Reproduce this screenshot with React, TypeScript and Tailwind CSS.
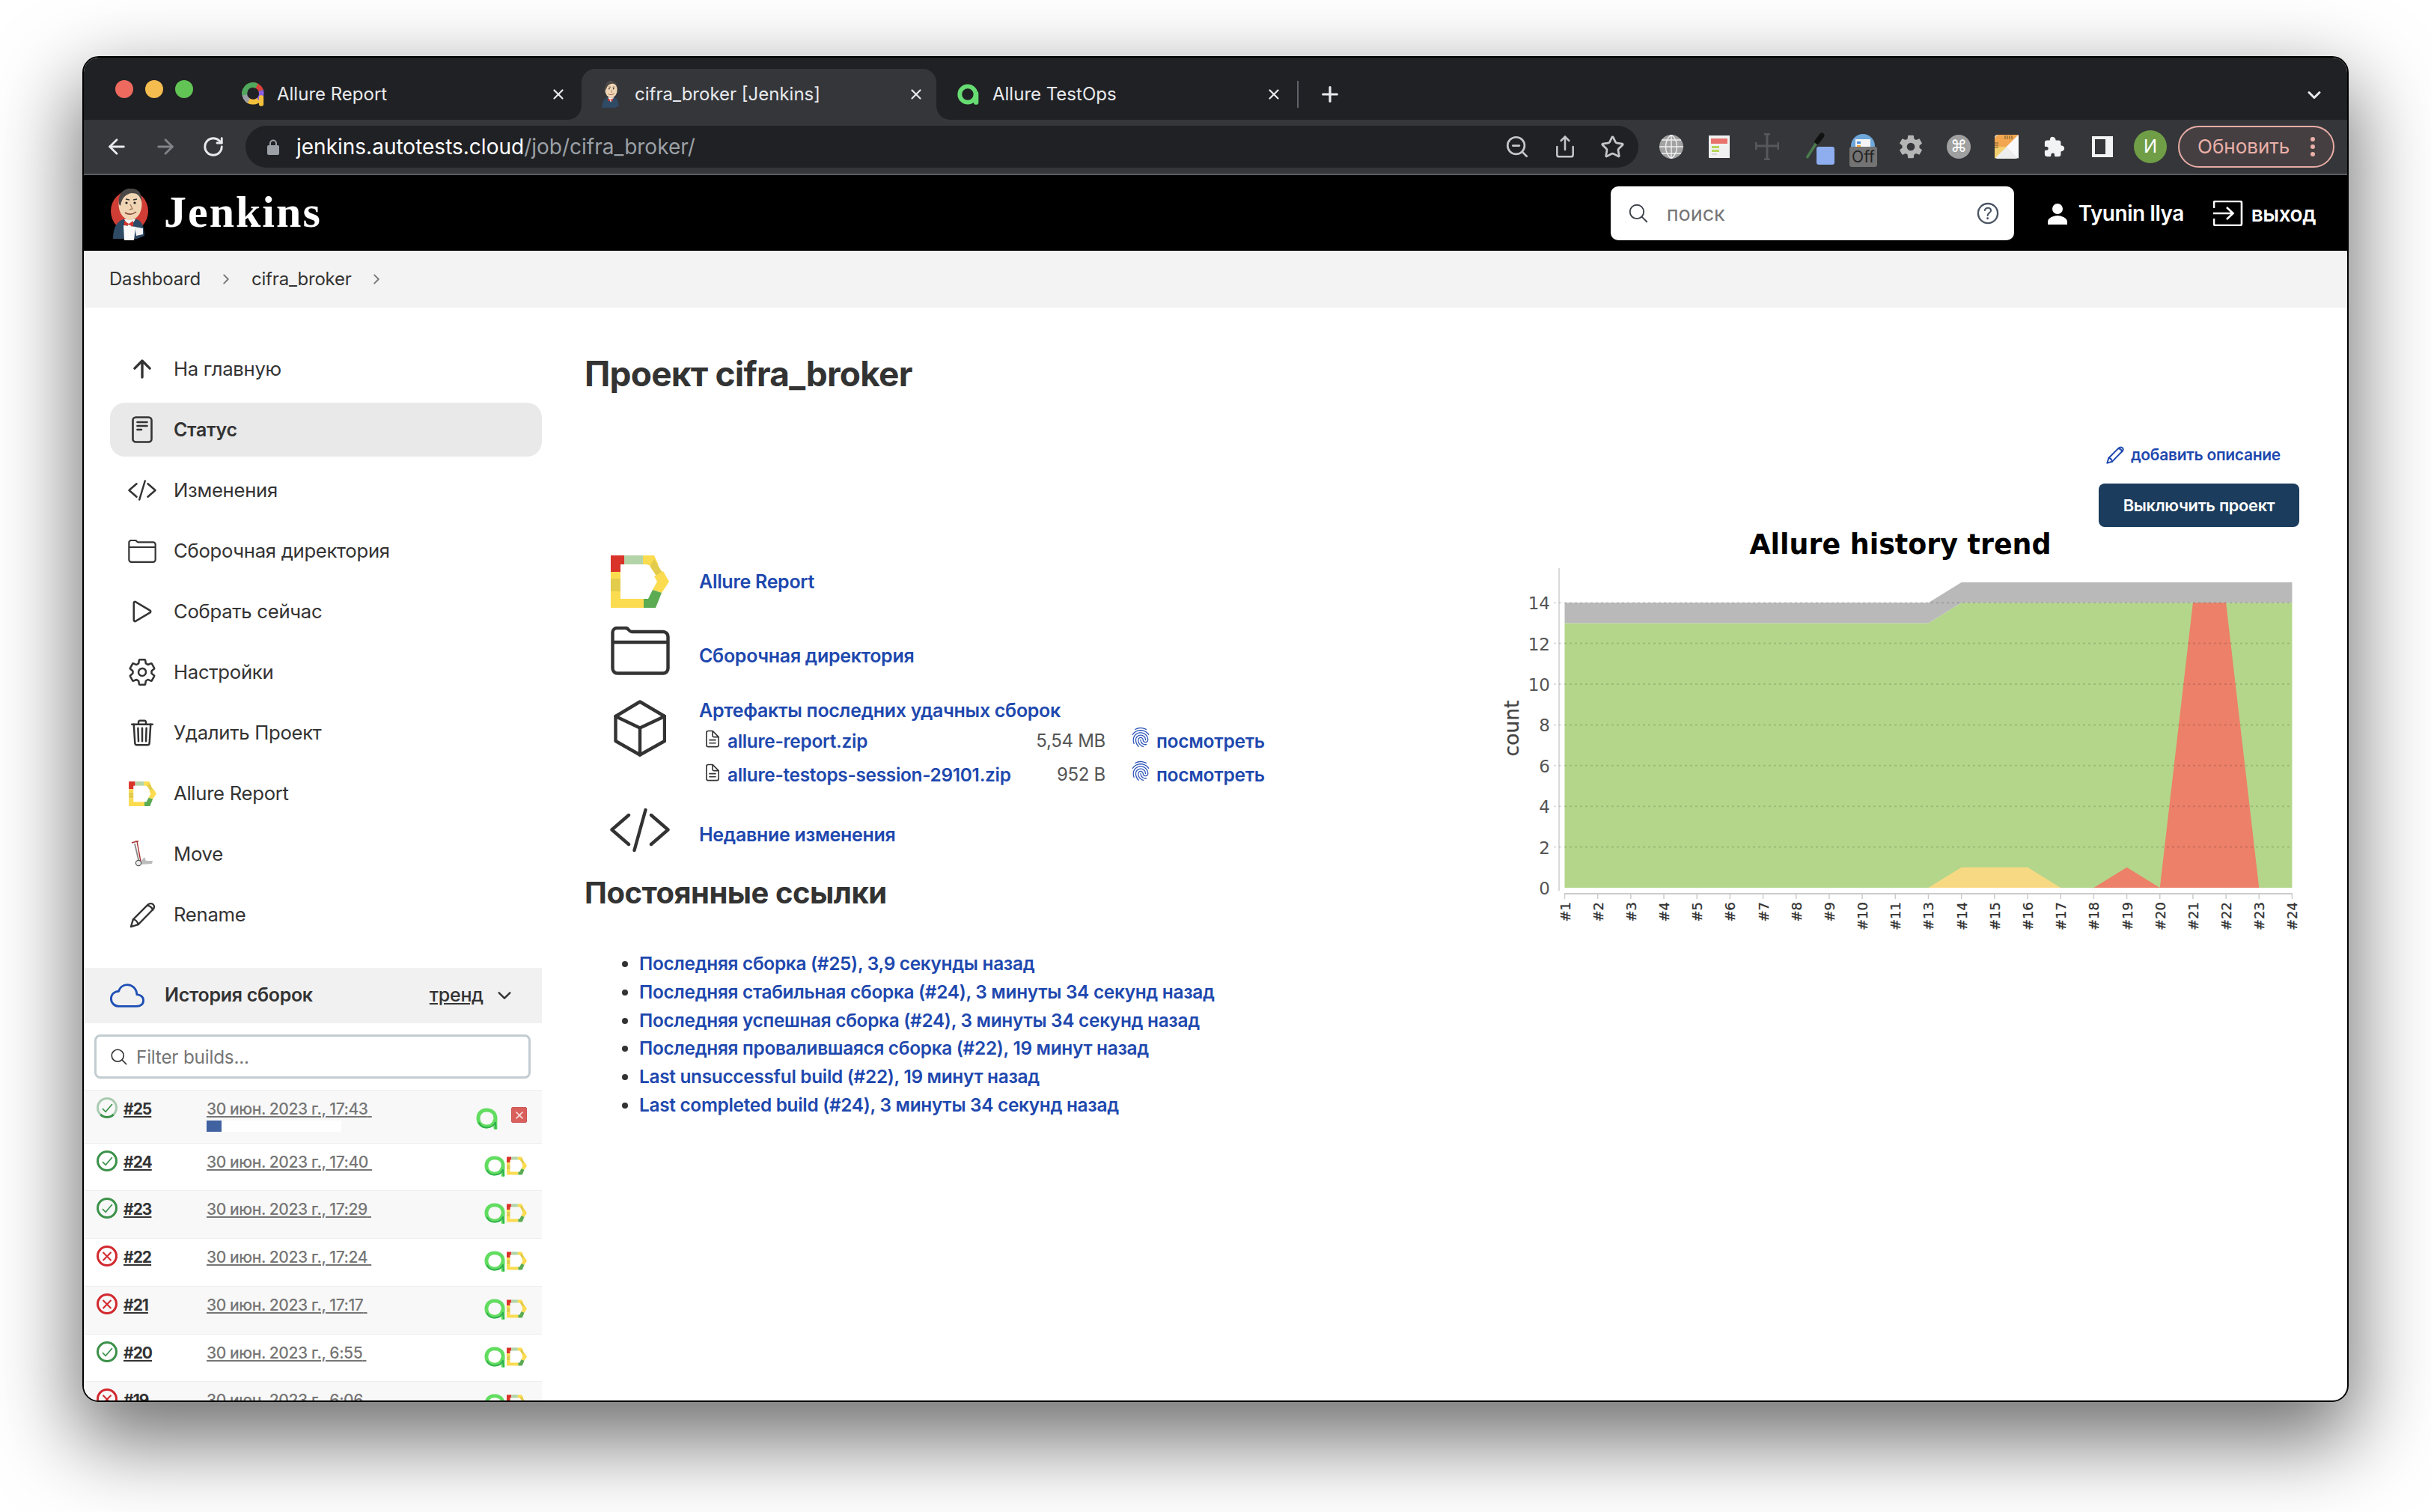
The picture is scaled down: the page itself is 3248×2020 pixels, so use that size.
import React from "react";
import { ArrowLeft, ArrowRight, RotateCw, ZoomOut, Share, Star, X, Plus, ChevronDown } from "lucide-react";
import {
  IoArrowUpOutline, IoCodeSlashOutline, IoPlayOutline, IoSettingsOutline, IoTrashOutline,
  IoCloudOutline, IoSearchOutline, IoHelpCircleOutline, IoPersonSharp, IoChevronForward,
  IoChevronDown, IoDocumentTextOutline, IoFingerPrintOutline, IoExtensionPuzzle, IoSettingsSharp,
  IoCheckmarkSharp, IoCloseSharp,
} from "react-icons/io5";

const UI = "font-['Inter','Liberation_Sans',sans-serif]";

function DLogo({ w, h }: { w: number; h: number }) {
  return (
    <svg width={w} height={h} viewBox="0 0 78 70" className="shrink-0">
      <polygon points="0,0 18,0 18,12 13,12 13,22 0,22" fill="#d9332a" />
      <polygon points="18,0 43,0 43,12 18,12" fill="#b3d4a8" />
      <polygon points="43,0 58,0 64,13 50,13 48,12 43,12" fill="#fbdc50" />
      <polygon points="58,5 72,28 64,32 52,14" fill="#e3cb4b" />
      <polygon points="70,21 78,35 68,50 56,46 62,35 58,28" fill="#fbdc50" />
      <polygon points="56,46 68,50 60,70 44,70 44,58 50,58" fill="#5bab52" />
      <polygon points="0,22 13,22 13,31 0,31" fill="#fbdc50" />
      <polygon points="0,31 13,31 13,48 0,48" fill="#e3cb4b" />
      <polygon points="0,48 13,48 13,58 44,58 44,70 0,70" fill="#fbdc50" />
    </svg>
  );
}

function ALogo({ w, h }: { w: number; h: number }) {
  return (
    <svg width={w} height={h} viewBox="0 0 30 30" className="shrink-0">
      <path d="M26 28 C25.5 26 26 22 26 15 C26 8 21 4 14 4 C7 4 3 9 3 15 C3 22 8 26 14 26 C19 26 24 23 25.5 17" fill="none" stroke="#62dd60" strokeWidth="5" strokeLinecap="round" />
      <path d="M4 21 C6 25 10 27.5 14 27.5 C19 27.5 24 25 26 20 L26.5 28.5" fill="none" stroke="#2fae4f" strokeWidth="1.8" strokeLinecap="round" />
    </svg>
  );
}

function ColorA() {
  const seg = (color: string, dash: string, rot: number) => (
    <circle cx="15" cy="14" r="10" fill="none" stroke={color} strokeWidth="6" strokeDasharray={dash} transform={`rotate(${rot} 15 14)`} />
  );
  return (
    <svg width="34" height="34" viewBox="0 0 30 30" className="shrink-0 -mx-[1px]">
      {seg("#d9423a", "14 70", -100)}
      {seg("#8a5fe0", "13 70", -20)}
      {seg("#f3bf3c", "15 70", 50)}
      {seg("#9aa0a6", "15 70", 120)}
      {seg("#4fa85b", "22 70", 170)}
      <rect x="22" y="16" width="5.5" height="13" rx="2.5" fill="#f3bf3c" />
    </svg>
  );
}

function TealA() {
  return (
    <svg width="32" height="32" viewBox="0 0 30 30" className="shrink-0">
      <circle cx="14" cy="15" r="10" fill="none" stroke="#66dc72" strokeWidth="5.5" />
      <rect x="21.5" y="11" width="6" height="17" rx="3" fill="#66dc72" />
    </svg>
  );
}

function Butler({ w, h, circle }: { w: number; h: number; circle?: boolean }) {
  return (
    <svg width={w} height={h} viewBox="0 0 52 72" className="shrink-0">
      {circle && <ellipse cx="26" cy="33" rx="25" ry="27" fill="#cf3d34" />}
      <path d="M4 70 C4 54 10 46 18 44 L36 44 C42 46 46 54 46 66 L36 70 Z" fill="#2f4a64" />
      <path d="M19 44 L26 56 L34 44 Z" fill="#f4f4f4" />
      <path d="M19 46 L25 50 L31 46 L31 54 L25 51 L19 54 Z" fill="#d6332b" />
      <ellipse cx="27" cy="24" rx="15.5" ry="21" fill="#f0d5b4" />
      <path d="M12 24 C10 8 20 2 29 3 C38 3 43 10 42 20 C40 12 36 9 29 9 C22 10 16 14 14 26 Z" fill="#4a4846" />
      <circle cx="22" cy="22" r="1.6" fill="#222" />
      <circle cx="33" cy="22" r="1.6" fill="#222" />
      <path d="M21 17 L26 18 M31 18 L36 17" stroke="#333" strokeWidth="1.6" fill="none" />
      <path d="M27 24 L30 30 L26 31" stroke="#a5795a" strokeWidth="1.3" fill="none" />
      <path d="M20 35 C24 38 30 38 35 34" stroke="#8a4a3c" strokeWidth="1.6" fill="none" />
      {circle && <path d="M18 52 L34 54 L32 72 L19 72 Z" fill="#fafafa" />}
      {circle && <path d="M33 54 L44 56 L44 64 L35 66 Z" fill="#f2f2f2" />}
    </svg>
  );
}

function PencilIcon({ size, color, width = 2.4 }: { size: number; color: string; width?: number }) {
  return (
    <svg width={size} height={size} viewBox="0 0 36 36" fill="none" stroke={color} strokeWidth={width} strokeLinejoin="round" strokeLinecap="round" className="shrink-0">
      <path d="M2 34 L5 24 L25 4 C27.5 1.5 31.5 1.5 33 4 C34.5 6 34 8.5 32 10.5 L12 31 Z" />
      <path d="M5 24 C8 24 11 27 12 31 M25 5 C28 5.5 31 8 32 11" />
    </svg>
  );
}

function FolderIcon({ w, h, width }: { w: number; h: number; width: number }) {
  return (
    <svg width={w} height={h} viewBox="0 0 79 65" fill="none" stroke="#333" strokeWidth={width} strokeLinejoin="round" className="shrink-0">
      <path d="M2.5 12 V8 a6 6 0 0 1 6 -6 H20 c4 0 4 5 8 5 H70 a6.5 6.5 0 0 1 6.5 6.5 V56 a6.5 6.5 0 0 1 -6.5 6.5 H9 a6.5 6.5 0 0 1 -6.5 -6.5 Z" />
      <path d="M2.5 21 H76.5" />
    </svg>
  );
}

function CubeIcon() {
  return (
    <svg width="70" height="76" viewBox="0 0 70 76" fill="none" stroke="#333" strokeWidth="4.4" strokeLinejoin="round" strokeLinecap="round" className="shrink-0">
      <path d="M35 2.5 L68 22 V55 L35 73.5 L2.5 55 V22 Z" />
      <path d="M2.5 22 L35 37.5 L68 22 M35 37.5 V73.5" />
    </svg>
  );
}

function CodeIcon() {
  return (
    <svg width="80" height="58" viewBox="0 0 80 58" fill="none" stroke="#333" strokeWidth="4.4" strokeLinejoin="round" strokeLinecap="round" className="shrink-0">
      <path d="M25 9 L2.5 28.5 L25 48 M55 9 L77.5 28.5 L55 48 M47.5 2 L32.5 56" />
    </svg>
  );
}

function ExtSlot({ children }: { children: React.ReactNode }) {
  return <div className="relative w-[64px] h-[56px] flex items-center justify-center shrink-0">{children}</div>;
}

function Tab({ icon, title, active }: { icon: React.ReactNode; title: string; active?: boolean }) {
  return (
    <div className={`relative h-[68px] flex items-center pl-[23px] shrink-0 ${active ? "w-[474px] mr-[4px] pr-[16px] bg-[#35363a] rounded-t-[18px]" : "w-[478px] pr-[20px]"}`}>
      {active && <span className="absolute left-[-18px] bottom-0 w-[18px] h-[18px] bg-[radial-gradient(circle_at_0_0,#202124_17.5px,#35363a_18px)]" />}
      {active && <span className="absolute right-[-18px] bottom-0 w-[18px] h-[18px] bg-[radial-gradient(circle_at_100%_0,#202124_17.5px,#35363a_18px)]" />}
      <span className="w-[32px] flex items-center justify-center shrink-0">{icon}</span>
      <span className="ml-[16px] text-[24px] leading-[32px] text-[#e8eaed] mb-[1px]">{title}</span>
      <X size={22} strokeWidth={2.4} color="#e8eaed" className="ml-auto" />
    </div>
  );
}

function TitleBar() {
  return (
    <div className="h-[83px] bg-[#202124] flex items-end pl-[42px] shrink-0">
      <div className="flex gap-[16px] self-start mt-[30px] mr-[41px]">
        <span className="w-[24px] h-[24px] rounded-full bg-[#ee6a5f]" />
        <span className="w-[24px] h-[24px] rounded-full bg-[#f5bd4f]" />
        <span className="w-[24px] h-[24px] rounded-full bg-[#61c454]" />
      </div>
      <Tab icon={<ColorA />} title="Allure Report" />
      <Tab icon={<Butler w={28} h={38} />} title="cifra_broker [Jenkins]" active />
      <Tab icon={<TealA />} title="Allure TestOps" />
      <span className="w-[2px] h-[36px] bg-[#5f6368] mb-[16px] shrink-0" />
      <Plus size={32} strokeWidth={2.4} color="#e8eaed" className="ml-[26px] mb-[18px] shrink-0" />
      <ChevronDown size={28} strokeWidth={2.6} color="#e8eaed" className="ml-auto mr-[30px] mb-[19px] shrink-0" />
    </div>
  );
}

function ToolBar() {
  return (
    <div className="h-[74px] bg-[#35363a] border-b-2 border-[#5c5d60] flex items-center shrink-0">
      <div className="w-[216px] flex items-center shrink-0 pl-[28px] gap-[33px]">
        <ArrowLeft size={32} strokeWidth={2.1} color="#e8eaed" />
        <ArrowRight size={32} strokeWidth={2.1} color="#808489" />
        <RotateCw size={30} strokeWidth={2.3} color="#e8eaed" />
      </div>
      <div className="w-[1861px] h-[56px] rounded-[28px] bg-[#202124] flex items-center pl-[29px] pr-[18px] shrink-0">
        <svg width="16" height="22" viewBox="0 0 16 22" className="shrink-0">
          <path d="M4 10 V6.5 a4 4 0 0 1 8 0 V10" fill="none" stroke="#9aa0a6" strokeWidth="2" />
          <rect x="0" y="9" width="16" height="13" rx="2" fill="#9aa0a6" />
        </svg>
        <span className="ml-[23px] text-[28px] leading-[36px] text-white">
          jenkins.autotests.cloud<span className="text-[#9aa0a6]">/job/cifra_broker/</span>
        </span>
        <div className="ml-auto flex items-center gap-[31px] text-[#c4c7ca]">
          <ZoomOut size={34} strokeWidth={1.9} />
          <Share size={32} strokeWidth={1.9} />
          <Star size={33} strokeWidth={2} />
        </div>
      </div>
      <div className="flex items-center ml-[12px]">
        <ExtSlot>
          <svg width="32" height="32" viewBox="0 0 32 32">
            <circle cx="16" cy="16" r="16" fill="#a2a2a2" />
            <path d="M0 16H32M3 7H29M3 25H29M16 0V32M16 0C6 8 6 24 16 32M16 0C26 8 26 24 16 32" stroke="#f0f0f0" strokeWidth="1.4" fill="none" />
          </svg>
        </ExtSlot>
        <ExtSlot>
          <svg width="28" height="30" viewBox="0 0 28 30">
            <rect width="28" height="30" fill="#f1f1f1" />
            <rect x="3" y="4" width="22" height="7" fill="#e9736c" />
            <rect x="4" y="14" width="10" height="3" fill="#b6d65a" />
            <rect x="4" y="19" width="10" height="3" fill="#b6d65a" />
            <rect x="4" y="24" width="7" height="2" fill="#d8d8d8" />
          </svg>
        </ExtSlot>
        <ExtSlot>
          <svg width="32" height="36" viewBox="0 0 32 36">
            <path d="M16 1V35M1 17H31M12 1H20M12 35H20M1 12V22M31 12V22" stroke="#56585c" strokeWidth="3" fill="none" />
          </svg>
        </ExtSlot>
        <ExtSlot>
          <svg width="28" height="38" viewBox="0 0 28 38">
            <path d="M3 34 L19 9" stroke="#4b7b4e" strokeWidth="3.5" />
            <path d="M17 12 L23 4" stroke="#111" strokeWidth="7" strokeLinecap="round" />
          </svg>
          <span className="absolute left-[34px] top-[28px] w-[24px] h-[24px] rounded-[3px] bg-[#8eaef0]" />
        </ExtSlot>
        <ExtSlot>
          <svg width="32" height="32" viewBox="0 0 32 32" className="mb-[2px]">
            <circle cx="16" cy="16" r="16" fill="#6ea7d9" />
            <rect x="6" y="7" width="20" height="18" fill="#f5f5f5" />
            <rect x="8" y="10" width="5" height="3" fill="#4a90d9" />
            <rect x="8" y="15" width="5" height="3" fill="#f2a93b" />
          </svg>
          <span className="absolute left-[14px] top-[28px] w-[37px] h-[27px] rounded-[3px] bg-[#737373] text-[#222] text-[21px] leading-[27px] text-center">Off</span>
        </ExtSlot>
        <ExtSlot><IoSettingsSharp size={34} color="#b5b5b5" /></ExtSlot>
        <ExtSlot>
          <span className="w-[32px] h-[32px] rounded-full bg-[#a0a0a0] text-white text-[22px] leading-[32px] text-center font-['DejaVu_Sans',sans-serif]">⌘</span>
        </ExtSlot>
        <ExtSlot>
          <svg width="32" height="32" viewBox="0 0 32 32">
            <rect width="32" height="32" rx="4" fill="#ededed" />
            <path d="M4 0 H32 L16 16 H0 V4 Z" fill="#f2a650" />
            <path d="M0 16 H16 L0 32 Z" fill="#f4cf6f" />
            <path d="M32 0 V32 L16 16 Z" fill="#fafafa" />
            <path d="M14 1V6M17 1V6M20 1V6M23 1V6M0 11H5M0 14H5M0 17H5" stroke="#6a5a2a" strokeWidth="1" />
          </svg>
        </ExtSlot>
        <ExtSlot><IoExtensionPuzzle size={30} color="#f1f3f4" /></ExtSlot>
        <ExtSlot>
          <span className="w-[28px] h-[28px] bg-[#f1f3f4] flex pl-[4px] py-[4px] pr-[10px]">
            <span className="flex-1 bg-[#35363a]" />
          </span>
        </ExtSlot>
        <ExtSlot>
          <span className="w-[44px] h-[44px] rounded-full bg-[#6f9e47] text-white text-[24px] leading-[44px] text-center">И</span>
        </ExtSlot>
      </div>
      <div className="ml-[5px] w-[209px] h-[56px] rounded-[28px] border-2 border-[#e8ada6] bg-[#453f42] flex items-center pl-[24px] shrink-0">
        <span className="text-[26px] leading-[32px] text-[#eab0a8]">Обновить</span>
        <span className="ml-auto mr-[24px] flex flex-col gap-[4px]">
          <span className="w-[6px] h-[6px] rounded-full bg-[#eab0a8]" />
          <span className="w-[6px] h-[6px] rounded-full bg-[#eab0a8]" />
          <span className="w-[6px] h-[6px] rounded-full bg-[#eab0a8]" />
        </span>
      </div>
    </div>
  );
}

function Header() {
  return (
    <div className="h-[101px] bg-black flex items-center pl-[35px] pr-[42px] shrink-0">
      <Butler w={52} h={72} circle />
      <span className="ml-[20px] text-[60px] leading-[64px] font-bold text-white font-['Liberation_Serif',serif] tracking-[2px] mb-[4px]">Jenkins</span>
      <div className="ml-auto w-[539px] h-[72px] rounded-[10px] bg-white flex items-center pl-[22px] pr-[16px]">
        <IoSearchOutline size={30} color="#3b4048" />
        <span className="ml-[23px] text-[27px] leading-[32px] text-[#757575] mt-[3px]">поиск</span>
        <IoHelpCircleOutline size={38} color="#4b5563" className="ml-auto" />
      </div>
      <IoPersonSharp size={32} color="white" className="ml-[42px] mt-[2px]" />
      <span className="ml-[12px] text-[28px] leading-[36px] font-semibold text-white tracking-[-0.5px]">Tyunin Ilya</span>
      <svg width="40" height="34" viewBox="0 0 40 34" className="ml-[39px]" fill="none" stroke="white" strokeWidth="2.6">
        <path d="M1 10 V3 a2 2 0 0 1 2 -2 H36 a2 2 0 0 1 2 2 V31 a2 2 0 0 1 -2 2 H3 a2 2 0 0 1 -2 -2 V24" />
        <path d="M0 17 H26 M18 9 L26.5 17 L18 25" />
      </svg>
      <span className="ml-[11px] text-[28px] leading-[36px] font-semibold text-white tracking-[-0.5px] mt-[2px]">выход</span>
    </div>
  );
}

function Breadcrumbs() {
  return (
    <div className="h-[76px] bg-[#f3f3f3] flex items-center pl-[34px] shrink-0 text-[24px] leading-[32px] text-[#333] tracking-[-0.2px]">
      <span>Dashboard</span>
      <IoChevronForward size={20} color="#777" className="ml-[24px]" />
      <span className="ml-[24px]">cifra_broker</span>
      <IoChevronForward size={20} color="#777" className="ml-[23px]" />
    </div>
  );
}

function StatusIcon() {
  return (
    <svg width="28" height="36" viewBox="0 0 28 36" fill="none" stroke="#333" strokeWidth="2.6" strokeLinecap="round">
      <rect x="1.5" y="1.5" width="25" height="33" rx="4" />
      <path d="M7.5 8H20.5M7.5 13H20.5M7.5 18H13" />
    </svg>
  );
}

function Trolley() {
  return (
    <svg width="30" height="36" viewBox="0 0 30 36" fill="none">
      <path d="M1 3 L8 1 L13 28 M6 1 L10 1" stroke="#a33" strokeWidth="1.4" />
      <path d="M5 4 L11 30" stroke="#888" strokeWidth="1.8" />
      <path d="M12 29 L18 22 L20 27 L29 27 L28 31 L13 32 Z" fill="#bdbdbd" />
      <circle cx="10" cy="30" r="3.6" fill="#eee" stroke="#555" strokeWidth="1.2" />
    </svg>
  );
}

const NAV: { label: string; icon: React.ReactNode; active?: boolean }[] = [
  { label: "На главную", icon: <IoArrowUpOutline size={36} color="#333" /> },
  { label: "Статус", icon: <StatusIcon />, active: true },
  { label: "Изменения", icon: <IoCodeSlashOutline size={40} color="#333" /> },
  { label: "Сборочная директория", icon: <FolderIcon w={38} h={31} width={4.6} /> },
  { label: "Собрать сейчас", icon: <IoPlayOutline size={40} color="#333" /> },
  { label: "Настройки", icon: <IoSettingsOutline size={40} color="#333" /> },
  { label: "Удалить Проект", icon: <IoTrashOutline size={40} color="#333" /> },
  { label: "Allure Report", icon: <DLogo w={37} h={33} /> },
  { label: "Move", icon: <Trolley /> },
  { label: "Rename", icon: <PencilIcon size={35} color="#333" /> },
];

const BUILDS = [
  { n: "#25", d: "30 июн. 2023 г., 17:43", ok: true, h: 71, running: true },
  { n: "#24", d: "30 июн. 2023 г., 17:40", ok: true, h: 63 },
  { n: "#23", d: "30 июн. 2023 г., 17:29", ok: true, h: 64 },
  { n: "#22", d: "30 июн. 2023 г., 17:24", ok: false, h: 64 },
  { n: "#21", d: "30 июн. 2023 г., 17:17", ok: false, h: 64 },
  { n: "#20", d: "30 июн. 2023 г., 6:55", ok: true, h: 63 },
  { n: "#19", d: "30 июн. 2023 г., 6:06", ok: false, h: 64 },
];

function BuildStatus({ ok, running }: { ok: boolean; running?: boolean }) {
  const c = ok ? "#3b9149" : "#d2282e";
  const border = running ? "border-[#a9cbb0] border-b-[#3b9149]" : ok ? "border-[#3b9149]" : "border-[#d2282e]";
  return (
    <span className={`relative w-[28px] h-[28px] rounded-full border-[3px] flex items-center justify-center shrink-0 ${border}`}>
      {ok ? <IoCheckmarkSharp size={19} color={c} /> : <IoCloseSharp size={23} color={c} />}
    </span>
  );
}

function BuildRow({ b, idx }: { b: (typeof BUILDS)[number]; idx: number }) {
  return (
    <div className={`shrink-0 flex items-start pl-[17px] pr-[20px] pt-[9px] border-t border-[#eeeeee] ${idx % 2 === 0 ? "bg-[#f8f8f8]" : "bg-white"} ${b.h === 71 ? "h-[71px]" : b.h === 63 ? "h-[63px]" : "h-[64px]"}`}>
      <BuildStatus ok={b.ok} running={b.running} />
      <span className="ml-[8px] mt-[2px] w-[111px] text-[21px] leading-[28px] font-bold underline text-[#333] tracking-[-1px] shrink-0">{b.n}</span>
      <div className="flex flex-col w-[240px] mt-[2px] shrink-0">
        <span className="text-[21px] leading-[28px] text-[#767676] font-medium underline tracking-[-0.42px] whitespace-pre">{b.d}{" "}</span>
        {b.running && (
          <span className="mt-[1px] w-[180px] h-[15px] bg-white flex">
            <span className="w-[20px] bg-[#4062a0]" />
          </span>
        )}
      </div>
      {b.running ? (
        <div className="ml-auto mt-[13px] flex items-start">
          <ALogo w={30} h={30} />
          <span className="ml-[17px] w-[21px] h-[21px] rounded-[2px] bg-[#d9605c] border border-[#c55] flex items-center justify-center">
            <IoCloseSharp size={18} color="#f5e0e0" />
          </span>
        </div>
      ) : (
        <div className="ml-auto mt-[6px] flex items-center gap-[1px]">
          <ALogo w={29} h={29} />
          <DLogo w={27} h={25} />
        </div>
      )}
    </div>
  );
}

function Sidebar() {
  return (
    <div className="w-[612px] shrink-0 flex flex-col pt-[46px] overflow-hidden">
      <div className="flex flex-col gap-[9px] pl-[35px] shrink-0">
        {NAV.map((n) => (
          <div key={n.label} className={`h-[72px] w-[577px] rounded-[20px] flex items-center pl-[19px] shrink-0 ${n.active ? "bg-[#e9e9e9]" : ""}`}>
            <span className="w-[48px] h-[48px] flex items-center justify-center shrink-0">{n.icon}</span>
            <span className={`ml-[18px] leading-[32px] text-[#333] tracking-[-0.3px] ${n.active ? "font-semibold text-[25px]" : "text-[25.7px]"}`}>{n.label}</span>
          </div>
        ))}
      </div>
      <div className="mt-[35px] h-[74px] bg-[#f1f1f1] flex items-center pl-[35px] shrink-0">
        <IoCloudOutline size={46} color="#1f4fb4" />
        <span className="ml-[27px] mb-[2px] text-[25px] leading-[32px] font-semibold text-[#333] tracking-[-0.3px]">История сборок</span>
        <span className="ml-[156px] mb-[2px] text-[25px] leading-[32px] font-medium text-[#333] underline tracking-[-0.3px]">тренд</span>
        <IoChevronDown size={26} color="#333" className="ml-[15px]" />
      </div>
      <div className="mt-[15px] ml-[14px] w-[583px] h-[59px] shrink-0 rounded-[8px] border-[3px] border-[#c3ccd1] flex items-center pl-[17px]">
        <IoSearchOutline size={26} color="#333" />
        <span className="ml-[10px] text-[24.3px] leading-[32px] text-[#757575] tracking-[-0.2px]">Filter builds...</span>
      </div>
      <div className="mt-[15px] flex flex-col">
        {BUILDS.map((b, i) => <BuildRow key={b.n} b={b} idx={i} />)}
      </div>
    </div>
  );
}

const LINK = "text-[#1e48ae] font-semibold tracking-[-0.3px]";

function LinkRow({ icon, children }: { icon: React.ReactNode; children: React.ReactNode }) {
  return (
    <div className="flex items-center pl-[34px]">
      <span className="w-[80px] flex items-center justify-center shrink-0">{icon}</span>
      <div className="ml-[39px]">{children}</div>
    </div>
  );
}

function Artifact({ name, size }: { name: string; size: string }) {
  return (
    <div className="h-[45px] flex items-center">
      <IoDocumentTextOutline size={26} color="#333" className="ml-[5px] mb-[6px] shrink-0" />
      <span className={`ml-[7px] w-[392px] text-[24.4px] leading-[32px] ${LINK}`}>{name}</span>
      <span className="w-[113px] text-right text-[24px] leading-[32px] text-[#555] tracking-[-0.3px]">{size}</span>
      <IoFingerPrintOutline size={28} color="#2a53b8" className="ml-[33px] mb-[10px] shrink-0" />
      <span className={`ml-[7px] text-[24.6px] leading-[32px] ${LINK}`}>посмотреть</span>
    </div>
  );
}

const LINKS = [
  "Последняя сборка (#25), 3,9 секунды назад",
  "Последняя стабильная сборка (#24), 3 минуты 34 секунд назад",
  "Последняя успешная сборка (#24), 3 минуты 34 секунд назад",
  "Последняя провалившаяся сборка (#22), 19 минут назад",
  "Last unsuccessful build (#22), 19 минут назад",
  "Last completed build (#24), 3 минуты 34 секунд назад",
];

function Chart() {
  const X0 = 2090.5, DX = 44.18, Y0 = 1186, DY = 27.2;
  const x = (i: number) => X0 + i * DX;
  const y = (v: number) => Y0 - v * DY;
  const labels = ["1","2","3","4","5","6","7","8","9","10","11","13","14","15","16","17","18","19","20","21","22","23","24"];
  const poly = (pts: [number, number][]) => pts.map(([i, v]) => `${x(i)},${y(v)}`).join(" ");
  return (
    <svg width="1080" height="556" viewBox="2000 704 1080 556" className="shrink-0 font-['DejaVu_Sans',sans-serif]">
      <text x="2539" y="740" textAnchor="middle" fontSize="36.4" fontWeight="700" fill="#000">Allure history trend</text>
      <line x1="2083" y1="759" x2="2083" y2="1190" stroke="#ccc" strokeWidth="1.5" />
      <polygon points={poly([[0,13],[11,13],[12,14],[22,14],[22,0],[0,0]])} fill="#b4d68a" />
      <polygon points={poly([[0,14],[11,14],[12,15],[22,15],[22,14],[12,14],[11,13],[0,13]])} fill="#b9b9b9" />
      <polygon points={poly([[11,0],[12,1],[14,1],[15,0]])} fill="#f8d983" />
      <polygon points={poly([[16,0],[17,1],[18,0]])} fill="#ec8069" />
      <polygon points={poly([[18,0],[19,14],[20,14],[21,0]])} fill="#ec8069" />
      {[0, 2, 4, 6, 8, 10, 12, 14].map((v) => (
        <g key={v}>
          {v > 0 && <line x1="2076" y1={y(v)} x2="3062" y2={y(v)} stroke="#000" strokeOpacity="0.13" strokeWidth="2" strokeDasharray="3 4" />}
          <text x="2071" y={y(v) + 9} textAnchor="end" fontSize="23" fill="#555">{v}</text>
        </g>
      ))}
      <line x1="2090" y1="1194" x2="3063" y2="1194" stroke="#ccc" strokeWidth="2" />
      {labels.map((l, i) => (
        <g key={l}>
          <line x1={x(i)} y1="1194" x2={x(i)} y2="1201" stroke="#ccc" strokeWidth="1.5" />
          <text transform={`translate(${x(i) + 7} 1205) rotate(-90)`} textAnchor="end" fontSize="18" fill="#333" stroke="#333" strokeWidth="0.3">#{l}</text>
        </g>
      ))}
      <text transform="translate(2029 973) rotate(-90)" textAnchor="middle" fontSize="26.5" fill="#444" stroke="#444" strokeWidth="0.3">count</text>
    </svg>
  );
}

function Main() {
  return (
    <div className="flex-1 flex min-w-0">
      <div className="flex-1 pl-[57px] min-w-0">
        <h1 className="mt-[58px] h-[60px] text-[46px] leading-[60px] font-bold text-[#333] tracking-[-0.8px]">Проект cifra_broker</h1>
        <div className="mt-[213px] flex flex-col">
          <LinkRow icon={<DLogo w={78} h={70} />}>
            <span className={`text-[25px] leading-[32px] ${LINK}`}>Allure Report</span>
          </LinkRow>
          <div className="mt-[25px]">
            <LinkRow icon={<FolderIcon w={79} h={65} width={4.4} />}>
              <span className={`block mt-[13px] text-[25px] leading-[32px] ${LINK}`}>Сборочная директория</span>
            </LinkRow>
          </div>
          <div className="mt-[33px] flex items-start pl-[34px]">
            <span className="w-[80px] h-[76px] flex items-center justify-center shrink-0">
              <CubeIcon />
            </span>
            <div className="ml-[39px] flex flex-col">
              <span className={`-mt-[2px] mb-[2px] text-[25px] leading-[32px] ${LINK}`}>Артефакты последних удачных сборок</span>
              <Artifact name="allure-report.zip" size="5,54 MB" />
              <Artifact name="allure-testops-session-29101.zip" size="952 B" />
            </div>
          </div>
          <div className="mt-[23px]">
            <LinkRow icon={<CodeIcon />}>
              <span className={`block mt-[11px] text-[25px] leading-[32px] ${LINK}`}>Недавние изменения</span>
            </LinkRow>
          </div>
        </div>
        <h2 className="mt-[33px] h-[44px] text-[40px] leading-[44px] font-bold text-[#333] tracking-[-0.5px]">Постоянные ссылки</h2>
        <ul className="mt-[54px] list-disc pl-[73px] marker:text-[#333]">
          {LINKS.map((l) => (
            <li key={l} className={`text-[24.4px] leading-[37.8px] ${LINK}`}>{l}</li>
          ))}
        </ul>
      </div>
      <div className="w-[1080px] mr-[56px] pt-[181px] flex flex-col items-end shrink-0">
        <div className="h-[32px] flex items-center pr-[33px]">
          <PencilIcon size={24} color="#1e48ae" width={3} />
          <span className={`ml-[9px] text-[21px] leading-[32px] ${LINK}`}>добавить описание</span>
        </div>
        <div className="mt-[22px] mr-[8px] w-[268px] h-[58px] rounded-[8px] bg-[#1b3c5c] flex items-center justify-center text-[21.8px] leading-[28px] font-semibold text-white tracking-[-0.3px]">
          Выключить проект
        </div>
        <Chart />
      </div>
    </div>
  );
}

export default function App() {
  return (
    <div className={`w-[3248px] h-[2020px] bg-white overflow-hidden pl-[110px] pt-[75px] ${UI}`}>
      <div className="w-[3028px] h-[1798px] rounded-[22px] border-2 border-black bg-white overflow-hidden flex flex-col shadow-[0_44px_110px_8px_rgba(0,0,0,0.56)]">
        <TitleBar />
        <ToolBar />
        <Header />
        <Breadcrumbs />
        <div className="flex-1 min-h-0 flex overflow-hidden">
          <Sidebar />
          <Main />
        </div>
      </div>
    </div>
  );
}
